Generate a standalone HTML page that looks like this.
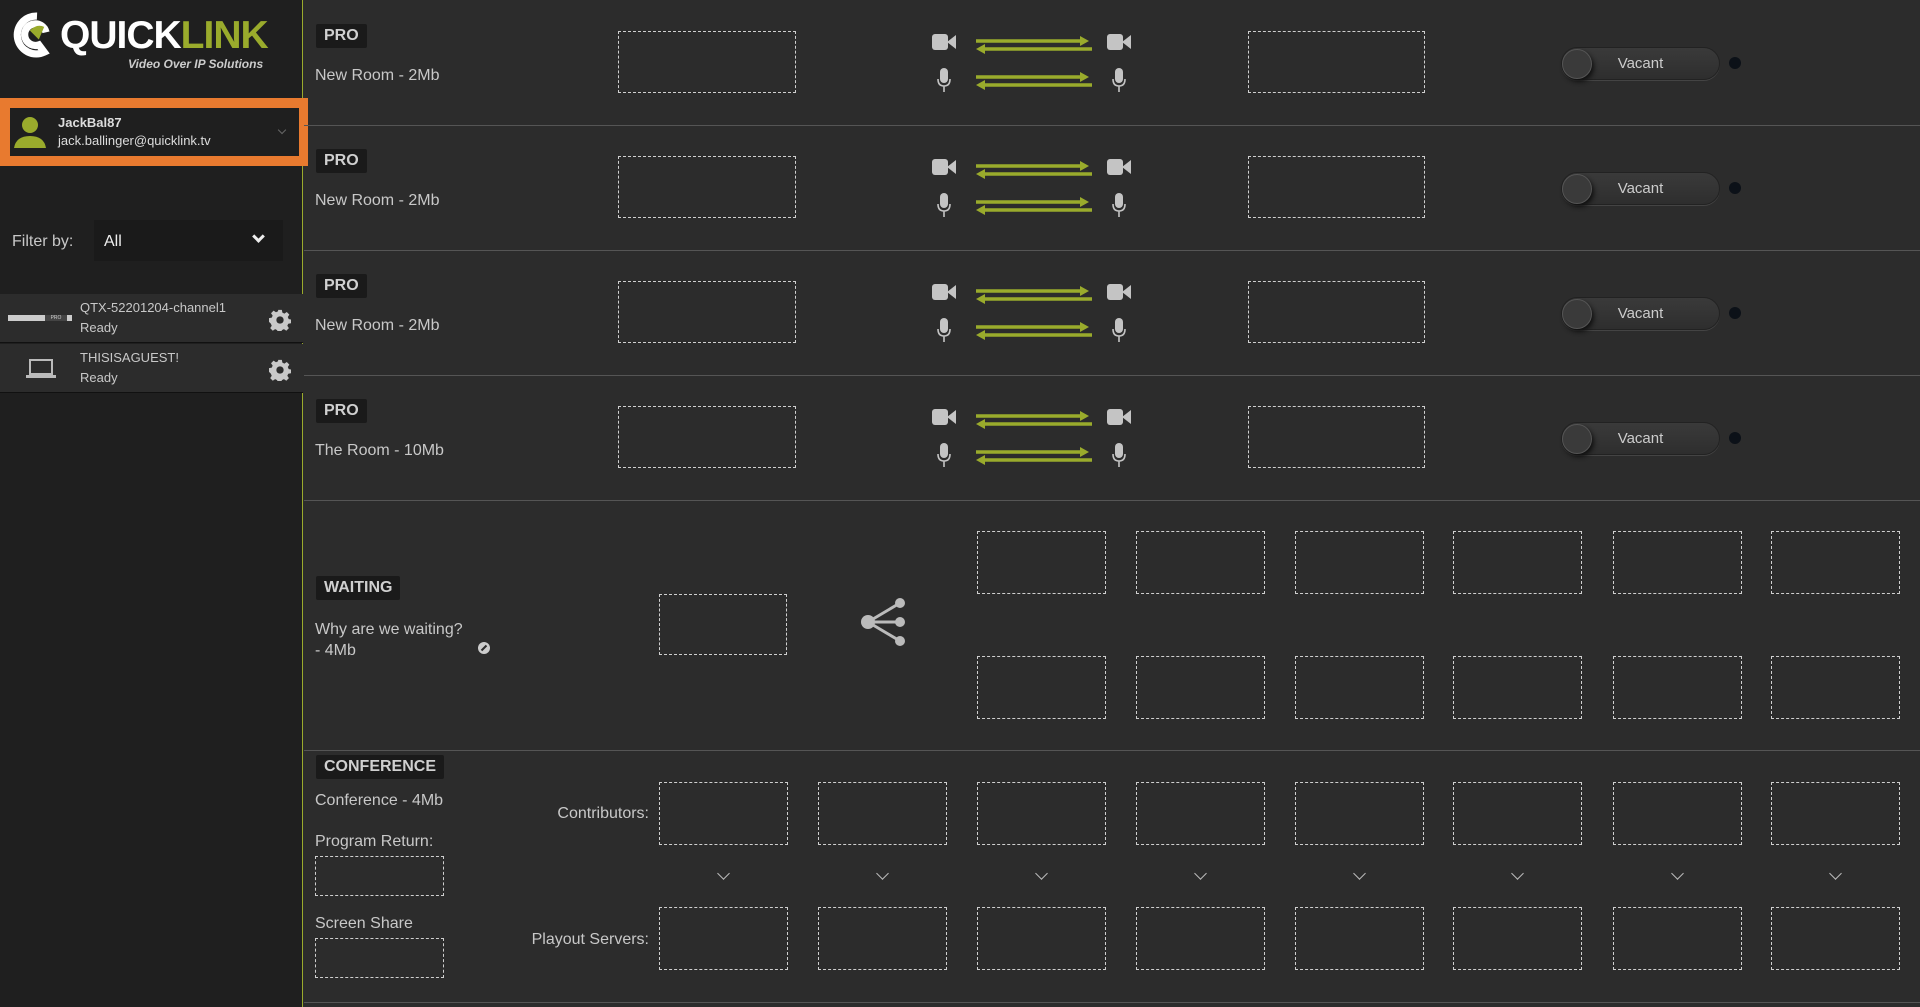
<!DOCTYPE html>
<html><head><meta charset="utf-8"><style>
*{margin:0;padding:0;box-sizing:border-box}
body{width:1920px;height:1007px;background:#2c2c2c;font-family:"Liberation Sans",sans-serif;color:#c8c8c8;position:relative;overflow:hidden;font-size:15px}
.a{position:absolute}
.sb{left:0;top:0;width:303px;height:1007px;background:#1f1f1f;border-right:1px solid #9aab2c}
.db{position:absolute;border:1px dashed #cfcfcf}
.badge{position:absolute;background:#1a1a1a;color:#d0d0d0;font-weight:bold;font-size:16px;padding:3px 8px;border-radius:2px}
.hl{position:absolute;left:304px;right:0;height:1px;background:#555}
.tog{position:absolute;width:159px;height:33px;border-radius:17px;background:linear-gradient(#3a3a3a,#2e2e2e);border:1px solid #222;box-shadow:0 1px 0 #444}
.tog .k{position:absolute;left:0;top:1px;width:30px;height:30px;border-radius:50%;background:#3a3a3a;border:1px solid #555;box-shadow:2px 3px 5px #111}
.tog span{position:absolute;left:0;right:0;top:7px;text-align:center;font-size:15px;color:#ccc}
.dot{position:absolute;width:12px;height:12px;border-radius:50%;background:#0c1118}
.chev{position:absolute;width:10px;height:10px;border-right:2px solid #bbb;border-bottom:2px solid #bbb;transform:rotate(45deg)}
.gear{position:absolute;font-size:24px;color:#ccc;line-height:24px}
</style></head><body>
<div class="a sb"></div>
<!-- logo -->
<svg class="a" style="left:10px;top:10px" width="54" height="50" viewBox="0 0 60 50"><path d="M30 4a21 21 0 1 0 8 40l-6-8a12 12 0 1 1 8-14" fill="none" stroke="#fff" stroke-width="8"/><path d="M22 20 q8 -8 16 -4 l-6 14z" fill="#9aab2c"/></svg>
<div class="a" style="left:60px;top:16px;font-size:39px;font-weight:bold;letter-spacing:-1px;color:#fff;line-height:40px">QUICK<span style="color:#9aab2c">LINK</span></div>
<div class="a" style="left:128px;top:57px;font-size:12px;font-style:italic;color:#ccc;font-weight:bold">Video Over IP Solutions</div>
<!-- user -->
<div class="a" style="left:0;top:98px;width:308px;height:68px;background:#e87a2f"></div>
<div class="a" style="left:10px;top:108px;width:289px;height:48px;background:#1f1f1f"></div>
<svg class="a" style="left:12px;top:114px" width="36" height="36" viewBox="0 0 36 36"><circle cx="18" cy="11" r="8" fill="#9aab2c"/><path d="M2 34q2-12 16-12t16 12z" fill="#9aab2c"/></svg>
<div class="a" style="left:58px;top:115px;font-size:13px;font-weight:bold;color:#ddd">JackBal87</div>
<div class="a" style="left:58px;top:133px;font-size:13px;color:#ddd">jack.ballinger@quicklink.tv</div>
<div class="chev" style="left:279px;top:127px;width:6px;height:6px;border-color:#666;border-width:1px"></div>
<!-- filter -->
<div class="a" style="left:12px;top:233px;font-size:16px">Filter by:</div>
<div class="a" style="left:94px;top:220px;width:189px;height:41px;background:#1a1a1a"></div>
<div class="a" style="left:104px;top:233px;font-size:16px;color:#eee">All</div>
<div class="chev" style="left:254px;top:232px;width:9px;height:9px;border-color:#eee;border-width:3px"></div>
<!-- devices -->
<div class="a" style="left:0;top:294px;width:303px;height:49px;background:#2c2c2c;border-bottom:1px solid #111"></div>
<div class="a" style="left:0;top:344px;width:303px;height:49px;background:#2c2c2c;border-bottom:1px solid #111"></div>
<div class="a" style="left:8px;top:315px;width:64px;height:6px;background:#ccc"><div style="position:absolute;left:37px;top:0;width:22px;height:6px;background:#444;color:#ccc;font-size:5px;line-height:6px;text-align:center">PRO</div></div>
<div class="a" style="left:80px;top:300px;font-size:13px">QTX-52201204-channel1</div>
<div class="a" style="left:80px;top:320px;font-size:13px">Ready</div>
<svg class="a" style="left:26px;top:358px" width="30" height="22" viewBox="0 0 30 22"><rect x="4" y="2" width="22" height="14" fill="none" stroke="#bbb" stroke-width="2"/><rect x="0" y="17" width="30" height="3" fill="#bbb"/></svg>
<div class="a" style="left:80px;top:350px;font-size:13px">THISISAGUEST!</div>
<div class="a" style="left:80px;top:370px;font-size:13px">Ready</div>
<svg class="a" style="left:269px;top:309px" width="22" height="22" viewBox="0 0 24 24"><path fill="#c8c8c8" d="M10 1h4l.6 3 2.2 1 2.6-1.7 2.8 2.8L20.5 8.7l1 2.3 2.5.5v4l-3 .6-1 2.2 1.7 2.6-2.8 2.8-2.6-1.7-2.3 1-.5 3h-4l-.6-3-2.2-1-2.6 1.7-2.8-2.8 1.7-2.6-1-2.3L0 14v-4l3-.6 1-2.2L2.2 4.6 5 1.8l2.6 1.7 2.3-1z"/><circle cx="12" cy="12" r="4" fill="#2c2c2c"/></svg>
<svg class="a" style="left:269px;top:359px" width="22" height="22" viewBox="0 0 24 24"><path fill="#c8c8c8" d="M10 1h4l.6 3 2.2 1 2.6-1.7 2.8 2.8L20.5 8.7l1 2.3 2.5.5v4l-3 .6-1 2.2 1.7 2.6-2.8 2.8-2.6-1.7-2.3 1-.5 3h-4l-.6-3-2.2-1-2.6 1.7-2.8-2.8 1.7-2.6-1-2.3L0 14v-4l3-.6 1-2.2L2.2 4.6 5 1.8l2.6 1.7 2.300-1z"/><circle cx="12" cy="12" r="4" fill="#2c2c2c"/></svg>

<svg width="0" height="0" style="position:absolute"><defs>
<g id="cam"><rect x="0" y="2" width="16" height="16" rx="3" fill="#c4c4c4"/><path d="M15 10l9-7v14z" fill="#c4c4c4"/></g>
<g id="mic"><rect x="3" y="0" width="8" height="15" rx="4" fill="#c4c4c4"/><path d="M1 11q0 7 6 7t6-7M7 18v6" fill="none" stroke="#c4c4c4" stroke-width="1.6"/></g>
<g id="arr"><path d="M0 4h108M4 12h112" stroke="#9aab2c" stroke-width="3.5"/><path d="M104 -1l9 5-9 5z" fill="#9aab2c"/><path d="M9 7l-9 5 9 5z" fill="#9aab2c"/></g>
</defs></svg>

<!-- rows -->
<div class="hl" style="top:125px"></div><div class="hl" style="top:250px"></div><div class="hl" style="top:375px"></div><div class="hl" style="top:500px"></div><div class="hl" style="top:750px"></div><div class="hl" style="top:1002px"></div>

<div class="badge" style="left:316px;top:24px">PRO</div><div class="a" style="left:315px;top:67px;font-size:16px">New Room - 2Mb</div>
<div class="db" style="left:618px;top:31px;width:178px;height:62px"></div><div class="db" style="left:1248px;top:31px;width:177px;height:62px"></div>
<svg class="a" style="left:932px;top:32px" width="204" height="64"><use href="#cam" x="0" y="0"/><use href="#cam" x="175" y="0"/><use href="#mic" x="5" y="36"/><use href="#mic" x="180" y="36"/><use href="#arr" x="44" y="5"/><use href="#arr" x="44" y="41"/></svg>
<div class="tog" style="left:1561px;top:47px"><div class="k"></div><span>Vacant</span></div><div class="dot" style="left:1729px;top:57px"></div>

<div class="badge" style="left:316px;top:149px">PRO</div><div class="a" style="left:315px;top:192px;font-size:16px">New Room - 2Mb</div>
<div class="db" style="left:618px;top:156px;width:178px;height:62px"></div><div class="db" style="left:1248px;top:156px;width:177px;height:62px"></div>
<svg class="a" style="left:932px;top:157px" width="204" height="64"><use href="#cam" x="0" y="0"/><use href="#cam" x="175" y="0"/><use href="#mic" x="5" y="36"/><use href="#mic" x="180" y="36"/><use href="#arr" x="44" y="5"/><use href="#arr" x="44" y="41"/></svg>
<div class="tog" style="left:1561px;top:172px"><div class="k"></div><span>Vacant</span></div><div class="dot" style="left:1729px;top:182px"></div>

<div class="badge" style="left:316px;top:274px">PRO</div><div class="a" style="left:315px;top:317px;font-size:16px">New Room - 2Mb</div>
<div class="db" style="left:618px;top:281px;width:178px;height:62px"></div><div class="db" style="left:1248px;top:281px;width:177px;height:62px"></div>
<svg class="a" style="left:932px;top:282px" width="204" height="64"><use href="#cam" x="0" y="0"/><use href="#cam" x="175" y="0"/><use href="#mic" x="5" y="36"/><use href="#mic" x="180" y="36"/><use href="#arr" x="44" y="5"/><use href="#arr" x="44" y="41"/></svg>
<div class="tog" style="left:1561px;top:297px"><div class="k"></div><span>Vacant</span></div><div class="dot" style="left:1729px;top:307px"></div>

<div class="badge" style="left:316px;top:399px">PRO</div><div class="a" style="left:315px;top:442px;font-size:16px">The Room - 10Mb</div>
<div class="db" style="left:618px;top:406px;width:178px;height:62px"></div><div class="db" style="left:1248px;top:406px;width:177px;height:62px"></div>
<svg class="a" style="left:932px;top:407px" width="204" height="64"><use href="#cam" x="0" y="0"/><use href="#cam" x="175" y="0"/><use href="#mic" x="5" y="36"/><use href="#mic" x="180" y="36"/><use href="#arr" x="44" y="5"/><use href="#arr" x="44" y="41"/></svg>
<div class="tog" style="left:1561px;top:422px"><div class="k"></div><span>Vacant</span></div><div class="dot" style="left:1729px;top:432px"></div>

<!-- waiting -->
<div class="badge" style="left:316px;top:576px">WAITING</div>
<div class="a" style="left:315px;top:619px;font-size:16px;line-height:21px">Why are we waiting?<br>- 4Mb</div>
<svg class="a" style="left:478px;top:642px" width="12" height="12" viewBox="0 0 12 12"><circle cx="6" cy="6" r="6" fill="#ccc"/><path d="M3.5 8.5l5-5" stroke="#2c2c2c" stroke-width="2"/></svg>
<div class="db" style="left:659px;top:594px;width:128px;height:61px"></div>
<svg class="a" style="left:860px;top:597px" width="48" height="52" viewBox="0 0 48 52"><path d="M8 25L40 6M8 25H40M8 25L40 44" stroke="#bbb" stroke-width="3"/><circle cx="8" cy="25" r="7" fill="#bbb"/><circle cx="40" cy="6" r="5" fill="#bbb"/><circle cx="40" cy="25" r="5" fill="#bbb"/><circle cx="40" cy="44" r="5" fill="#bbb"/></svg>
<div class="db" style="left:977px;top:531px;width:129px;height:63px"></div><div class="db" style="left:1136px;top:531px;width:129px;height:63px"></div><div class="db" style="left:1295px;top:531px;width:129px;height:63px"></div><div class="db" style="left:1453px;top:531px;width:129px;height:63px"></div><div class="db" style="left:1613px;top:531px;width:129px;height:63px"></div><div class="db" style="left:1771px;top:531px;width:129px;height:63px"></div>
<div class="db" style="left:977px;top:656px;width:129px;height:63px"></div><div class="db" style="left:1136px;top:656px;width:129px;height:63px"></div><div class="db" style="left:1295px;top:656px;width:129px;height:63px"></div><div class="db" style="left:1453px;top:656px;width:129px;height:63px"></div><div class="db" style="left:1613px;top:656px;width:129px;height:63px"></div><div class="db" style="left:1771px;top:656px;width:129px;height:63px"></div>

<!-- conference -->
<div class="badge" style="left:316px;top:755px">CONFERENCE</div>
<div class="a" style="left:315px;top:792px;font-size:16px">Conference - 4Mb</div>
<div class="a" style="left:315px;top:833px;font-size:16px">Program Return:</div>
<div class="db" style="left:315px;top:856px;width:129px;height:40px"></div>
<div class="a" style="left:315px;top:915px;font-size:16px">Screen Share</div>
<div class="db" style="left:315px;top:938px;width:129px;height:40px"></div>
<div class="a" style="left:449px;top:805px;width:200px;text-align:right;font-size:16px">Contributors:</div>
<div class="a" style="left:449px;top:931px;width:200px;text-align:right;font-size:16px">Playout Servers:</div>
<div class="db" style="left:659px;top:782px;width:129px;height:63px"></div><div class="db" style="left:818px;top:782px;width:129px;height:63px"></div><div class="db" style="left:977px;top:782px;width:129px;height:63px"></div><div class="db" style="left:1136px;top:782px;width:129px;height:63px"></div><div class="db" style="left:1295px;top:782px;width:129px;height:63px"></div><div class="db" style="left:1453px;top:782px;width:129px;height:63px"></div><div class="db" style="left:1613px;top:782px;width:129px;height:63px"></div><div class="db" style="left:1771px;top:782px;width:129px;height:63px"></div>
<div class="chev" style="left:719px;top:869px;width:9px;height:9px;border-width:1.5px"></div><div class="chev" style="left:878px;top:869px;width:9px;height:9px;border-width:1.5px"></div><div class="chev" style="left:1037px;top:869px;width:9px;height:9px;border-width:1.5px"></div><div class="chev" style="left:1196px;top:869px;width:9px;height:9px;border-width:1.5px"></div><div class="chev" style="left:1355px;top:869px;width:9px;height:9px;border-width:1.5px"></div><div class="chev" style="left:1513px;top:869px;width:9px;height:9px;border-width:1.5px"></div><div class="chev" style="left:1673px;top:869px;width:9px;height:9px;border-width:1.5px"></div><div class="chev" style="left:1831px;top:869px;width:9px;height:9px;border-width:1.5px"></div>
<div class="db" style="left:659px;top:907px;width:129px;height:63px"></div><div class="db" style="left:818px;top:907px;width:129px;height:63px"></div><div class="db" style="left:977px;top:907px;width:129px;height:63px"></div><div class="db" style="left:1136px;top:907px;width:129px;height:63px"></div><div class="db" style="left:1295px;top:907px;width:129px;height:63px"></div><div class="db" style="left:1453px;top:907px;width:129px;height:63px"></div><div class="db" style="left:1613px;top:907px;width:129px;height:63px"></div><div class="db" style="left:1771px;top:907px;width:129px;height:63px"></div>
</body></html>
